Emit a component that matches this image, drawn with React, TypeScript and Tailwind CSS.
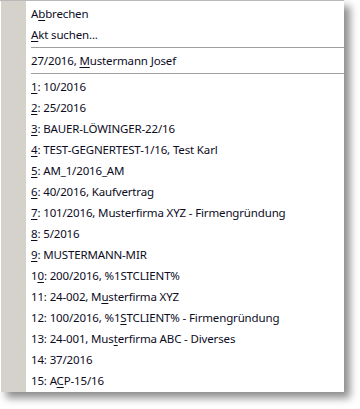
import React from "react"

type Item = { pre?: string; key?: string; post: string }

const top: Item[] = [
    { pre: "A", key: "b", post: "brechen" },
    { key: "A", post: "kt suchen..." },
]

const recent: Item = { pre: "27/2016, ", key: "M", post: "ustermann Josef" }

const items: Item[] = [
    { key: "1", post: ": 10/2016" },
    { key: "2", post: ": 25/2016" },
    { key: "3", post: ": BAUER-LÖWINGER-22/16" },
    { key: "4", post: ": TEST-GEGNERTEST-1/16, Test Karl" },
    { key: "5", post: ": AM_1/2016_AM" },
    { key: "6", post: ": 40/2016, Kaufvertrag" },
    { key: "7", post: ": 101/2016, Musterfirma XYZ - Firmengründung" },
    { key: "8", post: ": 5/2016" },
    { key: "9", post: ": MUSTERMANN-MIR" },
    { pre: "1", key: "0", post: ": 200/2016, %1STCLIENT%" },
    { pre: "11: 24-002, M", key: "u", post: "sterfirma XYZ" },
    { pre: "12: 100/2016, %1", key: "S", post: "TCLIENT% - Firmengründung" },
    { pre: "13: 24-001, Mus", key: "t", post: "erfirma ABC - Diverses" },
    { post: "14: 37/2016" },
    { pre: "15: A", key: "C", post: "P-15/16" },
]

function Row({ item }: { item: Item }) {
    return (
        <div className="h-[21px] leading-[21px] pl-[31px] whitespace-pre">
            {item.pre}
            {item.key && <u className="underline-offset-[2px]">{item.key}</u>}
            {item.post}
        </div>
    )
}

function Separator() {
    return (
        <div className="h-[5px] pl-[31px] pt-[2px]">
            <div className="h-px bg-[#a0a0a0]"></div>
        </div>
    )
}

export default function App() {
    return (
        <div className="w-[360px] h-[409px] bg-white overflow-hidden">
            <div
                className="relative w-[344px] h-[392px] bg-white border-t border-[#b9b9b9] pt-[2px] text-[11.5px] tracking-[-0.15px] text-[#0c0c1e] shadow-[6px_6px_8px_rgba(0,0,0,0.45)]"
                style={{ fontFamily: '"Noto Sans", "Open Sans", sans-serif' }}
            >
                <div className="absolute left-[1px] top-0 bottom-0 w-[25px] bg-[#d5d2cc]"></div>
                <div className="relative">
                    {top.map((item, i) => <Row key={i} item={item} />)}
                    <Separator />
                    <Row item={recent} />
                    <Separator />
                    {items.map((item, i) => <Row key={i} item={item} />)}
                </div>
            </div>
        </div>
    )
}
